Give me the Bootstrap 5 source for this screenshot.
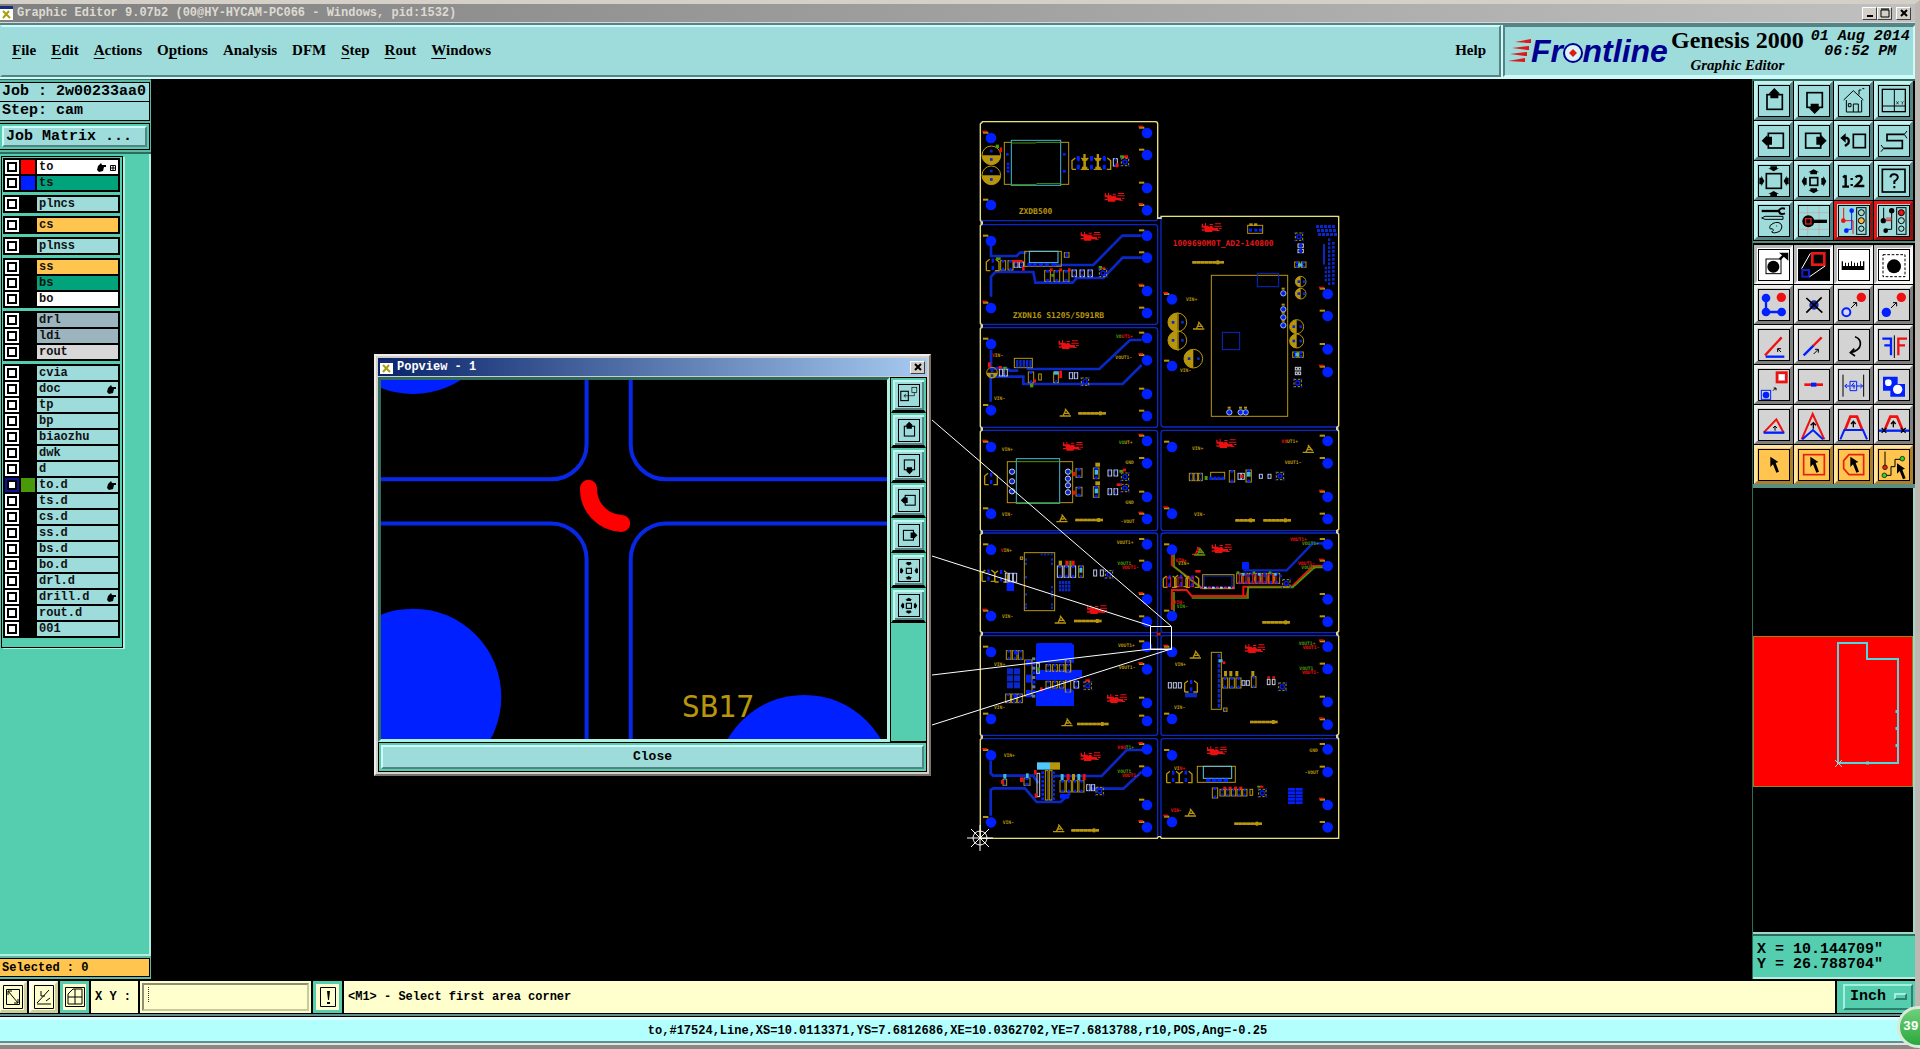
<!DOCTYPE html>
<html lang="en">
<head>
<meta charset="utf-8">
<meta name="viewport" content="width=device-width, initial-scale=1">
<title>Graphic Editor 9.07b2</title>
<link rel="stylesheet" href="https://cdn.jsdelivr.net/npm/bootstrap@5.3.0/dist/css/bootstrap.min.css">
<style>
:root{--cy:#9edcdc;--cyhi:#cffafa;--cylo:#568484;--teal:#55ceb0;--tealhi:#b0f0e0;--teallo:#2f6b5c;--amber:#ffc54f;--cream:#ffffcd;--win:#d4d0c8}
body{background:#000;color:#000;font:bold 12px/14px "Liberation Mono",monospace;overflow:hidden}
button,input,select{font:inherit;color:inherit;border-radius:0}
button{padding:0}
.t15{font-size:15px;line-height:18px}
.win-edge{border-top:4px solid var(--win);border-right:5px solid #bdb9b2;border-bottom:4px solid #8b8883}
.titlebar{height:19px;background:linear-gradient(90deg,#808080,#c0c0c0);color:#dedad2;border-bottom:1px solid #d8d8d8}
.wbtn{width:15px;height:13px;background:var(--win);border:1px solid;border-color:#fff #404040 #404040 #fff;line-height:9px}
.wbtn svg{display:block;margin:auto}
.topbar{height:56px;border-top:2px solid var(--cylo);background:var(--cyhi)}
.menu-pane{background:var(--cy);border:2px solid;border-color:var(--cyhi) var(--cylo) var(--cylo) var(--cy);margin-bottom:2px;gap:15px;padding:0 13px 2px 10px;font:bold 15px/20px "Liberation Serif",serif}
.menu-pane a{color:#000;text-decoration:none}
.menu-pane u{text-underline-offset:3px;text-decoration-thickness:1px}
.brand-pane{width:412px;background:var(--cy);border:2px solid;border-color:var(--cylo) var(--cyhi) var(--cyhi) var(--cylo);margin:0 0 2px 2px}
.genesis{font:bold 24px/26px "Liberation Serif",serif}
.gsub{font:italic bold 15px/24px "Liberation Serif",serif}
.clock{font-style:italic;font-size:15px;line-height:15px;padding:2px 0 0 4px}
.side-l{width:151px;background:var(--teal);border-right:2px solid var(--tealhi)}
.side-head{border-top:1px solid var(--teallo);border-bottom:2px solid var(--teallo);padding:2px 1px 2px 0;margin-right:-2px;background:#5cb9a4}
.field-box{background:var(--cy);border:1px solid #000;border-left:0;height:20px;padding-left:2px}
.field-box+.field-box{border-top:0;height:19px}
.matrix-frame{background:var(--teal);border:1px solid #000;border-left:0;margin-top:2px;padding:2px}
.bevel{background:var(--cy);border:2px solid;border-color:var(--cyhi) var(--cylo) var(--cylo) var(--cyhi)}
.matrix-btn{display:block;height:21px;width:100%;text-align:left;padding-left:2px;line-height:16px}
.layers{width:122px;border:1px solid #000;box-shadow:2px 1px 0 var(--tealhi);margin:2px 0 0 1px;padding:1px 2px 9px 1px;gap:3px}
.lgroup{background:#000;padding:2px;gap:2px;width:117px}
.lrow{height:14px;gap:2px}
.lrow input{appearance:none;width:14px;height:14px;margin:0;background:#fff;border:2px solid #fff;box-shadow:inset 0 0 0 2px #000}
.lrow input:checked{border-color:#101090}
.swatch{width:14px;height:14px}
.lname{border:0;text-align:left;line-height:14px;padding:0 2px;color:#111}
.sel-frame{background:#5cb9a4;padding:2px 1px 2px 0;border-top:2px solid var(--tealhi);margin-right:-2px}
.sel-box{background:var(--amber);border:1px solid #000;border-left:0;height:19px;line-height:18px;padding-left:2px}
.side-r{width:163px;border-left:1px solid var(--teallo);background:#000}
.toolbox{border-top:2px solid var(--teallo);border-bottom:4px solid #5a8c80}
.tools{display:grid;grid-template-columns:repeat(4,39px);gap:1px;padding:0 0 0 1px}
.tools+.tools{border-top:2px solid #5a8c80;margin-top:1px;padding-top:2px}
.tool{height:39px;width:39px;background:var(--cy);border:3px solid;border-color:#c4f0f0 #568484 #568484 #c4f0f0;display:flex;align-items:center;justify-content:center}
.tool svg{outline:1px solid #000;width:30px;height:30px}
.tool.on{border-color:#e81818 #901414 #901414 #e81818}
.tool.gr{background:#d3d3d3;border-color:#efefef #808080 #808080 #efefef}
.tool.wh{background:#fff;border-color:#b8b8b8 #f4f4f4 #f4f4f4 #b8b8b8}
.tool.am{background:var(--amber);border-color:#ffe4a8 #a88030 #a88030 #ffe4a8}
.thumb{border-right:2px solid #9fd8c8}
.xy{background:var(--teal);border-top:2px solid var(--teallo);border-bottom:2px solid var(--tealhi);box-shadow:0 -2px 0 #9fd8c8;height:45px;padding:6px 4px;line-height:15px}
.foot{height:32px;gap:2px;margin-top:2px}
.foot>*{background:var(--cream)}
.fbtn{width:29px;border:3px solid;border-color:#fffff0 #cfcf9c #cfcf9c #fffff0}
.fbtn:first-child{width:27px;border-left-width:1px}
.fbtn.on{border:3px solid var(--teal)}
.fbtn svg{width:20px;height:24px;display:block;margin:auto}
.xylabel{width:47px}
.foot .xyin{width:167px;margin:2px;border:2px solid;border-color:#8e8e70 #c9c99e #c9c99e #8e8e70;box-shadow:0 0 0 2px var(--cream);padding:0 6px;background:repeating-linear-gradient(#333 0 1px,var(--cream) 1px 2px) 4px 2px/1px 16px no-repeat var(--cream)}
.unit{width:78px;padding:3px 2px 3px 6px}
.foot .unit{background:var(--teal)}
.unit select{appearance:none;width:100%;height:100%;background:var(--teal);border:2px solid;border-color:#a5f0dc #2f7f6c #2f7f6c #a5f0dc;padding:0 5px}
.nub{right:8px;top:12px;width:13px;height:7px;background:var(--teal);border:2px solid;border-color:#a5f0dc #2f7f6c #2f7f6c #a5f0dc;pointer-events:none}
.status{height:26px;background:#b2fffd;border-top:3px solid #d8ffff;border-bottom:2px solid #658e8e;box-shadow:0 -1px 0 #000,0 -3px 0 #658e8e,0 2px 0 #e4e4e4;margin:4px 0 2px;line-height:22px}
.orb{width:42px;height:42px;border-radius:50%;background:linear-gradient(#6fd07a,#2aa83c);border:3px solid #d9ead9;color:#fff;right:-24px;bottom:-3px;line-height:36px;padding-left:3px;font-size:13px}
.popview{left:223px;top:275px;width:557px;background:var(--win);border:2px solid;border-color:#eee #77736c #77736c #eee;padding:2px}
.poptitle{height:19px;background:linear-gradient(90deg,#0a246a,#a6caf0);color:#fff;padding:0 2px;border-bottom:1px solid #ccc}
.popcanvas{border:3px solid;border-color:var(--teallo) var(--tealhi) var(--tealhi) var(--teallo);background:#000;height:365px}
.poptools{width:37px;background:var(--teal);border:1px solid #000}
.poptools button{width:35px;height:35px;background:var(--cy);border:2px solid var(--teal);border-bottom:3px solid #000;box-shadow:inset 2px 2px 0 #c4f6f0,inset -2px -2px 0 #568484}
.poptools svg{width:20px;height:21px;outline:1px solid #000;display:block;margin:auto}
.popclose{height:30px;background:var(--teal);border:1px solid #000;padding:2px}
.popclose button{width:100%;height:100%;font-size:13px;font-weight:bold;line-height:18px}
.scene{left:0;top:0}
.scene text{font-family:"DejaVu Sans Mono",monospace;font-weight:bold}
</style>
<script src="https://cdn.jsdelivr.net/npm/bootstrap@5.3.0/dist/js/bootstrap.bundle.min.js"></script>
</head>
<body>
<div class="win-edge vh-100 d-flex flex-column position-relative">
  <header class="titlebar d-flex align-items-center justify-content-between pe-1">
    <span class="d-flex align-items-center gap-1">
      <svg width="13" height="14" viewBox="0 0 13 14"><path fill="#1a2a7a" d="M0 0h13v3H0z"/><path fill="#fff" d="M0 3h13v11H0z"/><path d="M3 5l7 7M9 5l-6 7" stroke="#a8a010" stroke-width="2"/></svg>
      <span>Graphic Editor 9.07b2 (00@HY-HYCAM-PC066 - Windows, pid:1532)</span>
    </span>
    <span class="d-flex">
      <button class="wbtn" aria-label="Minimize"><svg width="10" height="10"><path d="M2 8h6" stroke="#000" stroke-width="2"/></svg></button>
      <button class="wbtn" aria-label="Maximize"><svg width="10" height="10"><path d="M1 2h8v7H1z M1 1h8" fill="none" stroke="#000"/></svg></button>
      <button class="wbtn ms-1" aria-label="Close window"><svg width="10" height="10"><path d="M2 2l6 6M8 2l-6 6" stroke="#000" stroke-width="2"/></svg></button>
    </span>
  </header>

  <div class="topbar d-flex">
    <nav class="menu-pane d-flex align-items-center flex-grow-1">
      <a href="#"><u>F</u>ile</a><a href="#"><u>E</u>dit</a><a href="#"><u>A</u>ctions</a><a href="#">O<u>p</u>tions</a><a href="#">Analysis</a><a href="#">DFM</a><a href="#"><u>S</u>tep</a><a href="#"><u>R</u>out</a><a href="#"><u>W</u>indows</a>
      <a href="#" class="ms-auto">Help</a>
    </nav>
    <div class="brand-pane d-flex">
      <svg width="166" height="48" viewBox="-2 0 166 48">
        <g fill="#e01818"><path d="M8 15l16-3v4h-3zM5 21l17-2v4h-2zM3 27l17-2v4h-2zM1 34l17-3v4z"/></g>
        <text x="24" y="35" font-family="Liberation Sans" font-weight="bold" font-style="italic" font-size="32" fill="#000090">Fr<tspan fill="none">o</tspan>ntline</text>
        <circle cx="66" cy="26" r="9" fill="#d8f4f4" stroke="#000090" stroke-width="2"/><path d="M66 22l4 4-4 4-4-4z" fill="#e01818"/>
      </svg>
      <div class="text-center d-flex flex-column"><span class="genesis">Genesis 2000</span><span class="gsub">Graphic Editor</span></div>
      <div class="clock text-center flex-grow-1 text-nowrap">01 Aug 2014<br>06:52 PM</div>
    </div>
  </div>

  <main class="d-flex flex-grow-1">
    <aside class="side-l d-flex flex-column">
      <div class="side-head">
        <div class="field-box t15">Job : 2w00233aa0</div>
        <div class="field-box t15">Step: cam</div>
        <div class="matrix-frame"><button class="bevel matrix-btn t15">Job Matrix ...</button></div>
      </div>
      <div class="layers d-flex flex-column" id="layers"></div>
      <div class="sel-frame mt-auto"><div class="sel-box">Selected : 0</div></div>
    </aside>

    <section class="flex-grow-1 position-relative overflow-hidden">
      <svg class="scene position-absolute" width="1601" height="900" viewBox="151 79 1601 900">
        <g id="board" transform="translate(970 110) scale(.33333)"></g>
        <g fill="none" stroke="#fff" stroke-width="1">
          <path d="M932 420L1171 626M932 556L1151 626M932 675L1151 649L1171 649L932 725M1150.500 626.500H1171.500V649.500H1150.500z"/>
          <path d="M980 825v26M967 838h26M971 829l18 18M989 829l-18 18"/><circle cx="980" cy="838" r="7"/>
        </g>
      </svg>
      <div class="popview position-absolute">
        <div class="poptitle d-flex align-items-center justify-content-between">
          <span class="d-flex align-items-center gap-1"><svg width="13" height="14" viewBox="0 0 13 14"><path fill="#1a2a7a" d="M0 0h13v3H0z"/><path fill="#fff" d="M0 3h13v11H0z"/><path d="M3 5l7 7M9 5l-6 7" stroke="#a8a010" stroke-width="2"/></svg>Popview - 1</span>
          <button class="wbtn" aria-label="Close popview"><svg width="10" height="10"><path d="M2 2l6 6M8 2l-6 6" stroke="#000" stroke-width="2"/></svg></button>
        </div>
        <div class="d-flex">
          <div class="popcanvas flex-grow-1">
            <svg class="d-block w-100 h-100" viewBox="0 0 505 358" preserveAspectRatio="xMinYMin slice">
              <g fill="#0020ff"><circle cx="32" cy="-74" r="88"/><circle cx="32" cy="316" r="88"/></g>
              <g fill="none" stroke="#0828e8" stroke-width="4">
                <path d="M205 0V64A35 35 0 0 1 170 99H0M249 0V64A35 35 0 0 0 284 99H506M0 143H170A35 36 0 0 1 205 179V360M506 143H284A35 36 0 0 0 249 179V360"/>
              </g>
              <path d="M207 108A34 34 0 0 0 240 143" fill="none" stroke="#f00" stroke-width="17" stroke-linecap="round"/>
              <text x="300" y="336" font-family="DejaVu Sans Mono" font-weight="normal" font-size="30" fill="#b8960c">SB17</text>
              <circle cx="422" cy="402" r="88" fill="#0020ff"/>
            </svg>
          </div>
          <div class="poptools d-flex flex-column" id="poptools"></div>
        </div>
        <div class="popclose"><button class="bevel">Close</button></div>
      </div>
    </section>

    <aside class="side-r d-flex flex-column">
      <div class="toolbox"><div class="tools" id="toolsA"></div><div class="tools" id="toolsB"></div></div>
      <div class="thumb flex-grow-1 d-flex align-items-center">
        <svg width="160" height="151" viewBox="0 0 160 151" class="d-block w-100"><path d="M0 0h160v151H0z" fill="#f00" stroke="#a08010" stroke-width="2"/><path d="M85 7h29v16h31v104H85z" fill="none" stroke="#50d8e0" stroke-width="2"/><path d="M144 74v3M144 91v3M144 108v3M113 127h3" stroke="#50d8e0" stroke-width="3"/><path d="M82 124l7 7M89 124l-7 7" stroke="#ccc"/></svg>
      </div>
      <div class="xy t15">X = 10.144709"<br>Y = 26.788704"</div>
    </aside>
  </main>

  <footer class="foot d-flex">
    <button class="fbtn" aria-label="Measure"><svg viewBox="0 0 20 24" fill="none" stroke="#000"><path d="M.5.5h19v23H.5z M3.500 4.500h13v15h-13zM5 6l10 12M5 10V6h4M15 14v4h-4"/></svg></button>
    <button class="fbtn" aria-label="Angle"><svg viewBox="0 0 20 24" fill="none" stroke="#000"><path d="M.5.5h19v23H.5z M3 18L15 5M3 19h14M7 6v5h4M12 16l4-3"/></svg></button>
    <button class="fbtn on" aria-label="Grid"><svg viewBox="0 0 20 24" fill="none" stroke="#000"><path d="M.5 2.500h19v19H.5z M3 9l5-5h9v15H3zM10 4v15M3 12h14" stroke-width="1"/></svg></button>
    <label class="xylabel d-flex align-items-center ps-1" for="xy">X Y :</label>
    <input class="xyin" id="xy" type="text">
    <button class="fbtn on" aria-label="Alert"><svg viewBox="0 0 20 24"><path d="M2.500 2.500h15v19h-15z" fill="none" stroke="#000"/><path d="M9 6h3l-1 9h-1zM9 17h3v2H9z"/></svg></button>
    <div class="flex-grow-1 d-flex align-items-center ps-1">&lt;M1&gt; - Select first area corner</div>
    <div class="unit position-relative"><select class="t15" aria-label="Unit"><option>Inch</option><option>MM</option></select><span class="nub position-absolute"></span></div>
  </footer>
  <div class="status text-center">to,#17524,Line,XS=10.0113371,YS=7.6812686,XE=10.0362702,YE=7.6813788,r10,POS,Ang=-0.25</div>
  <div class="orb position-absolute overflow-hidden">39</div>
</div>

<script>
// ---------- layer list ----------
const C = '#9edcdc', W = '#fff', A = '#ffc54f', G = '#00a37c', B = '#9cb4be';
const hand = '<svg class="float-end" width="9" height="14" viewBox="0 0 9 14"><path d="M0 10l1-4 3-3 1 2h4v2H7l-1 4-4 1z"/></svg>';
const grid = '<svg class="float-end ms-1" width="6" height="14" viewBox="0 0 6 14"><path d="M.5 5.500h5v5h-5zM3 5v6M0 8h6" fill="none" stroke="#000"/></svg>';
const groups = [
  [['to',W,'#f00',grid+hand],['ts',G,'#0020ff']],
  [['plncs',C]], [['cs',A]], [['plnss',C]],
  [['ss',A],['bs',G],['bo',W]],
  [['drl',B],['ldi',B],['rout','#d8d8d8']],
  [['cvia',C],['doc',C,'',hand],['tp',C],['bp',C],['biaozhu',C],['dwk',C],['d',C],['to.d',C,'#489a08',hand],['ts.d',C],['cs.d',C],['ss.d',C],['bs.d',C],['bo.d',C],['drl.d',C],['drill.d',C,'',hand],['rout.d',C],['001',C]]
];
document.getElementById('layers').innerHTML = groups.map(g => '<div class="lgroup d-flex flex-column">' + g.map(([n,bg,sw,ex]) =>
  `<div class="lrow d-flex"><input type="checkbox" aria-label="Show ${n}"${n==='to.d'?' checked':''}><span class="swatch" style="background:${sw||'#000'}"></span><button class="lname flex-grow-1" style="background:${bg}">${ex||''}${n}</button></div>`).join('') + '</div>').join('');

// ---------- tool icons, drawn on a 90 x 90 grid ----------
const L = (d,w=4,c='#000') => `<path d="${d}" fill="none" stroke="${c}" stroke-width="${w}"/>`;
const F = (d,c='#000') => `<path d="${d}" fill="${c}"/>`;
const R = (x,y,w,h,s=5,c='#000') => `<rect x="${x}" y="${y}" width="${w}" height="${h}" fill="none" stroke="${c}" stroke-width="${s}"/>`;
const O = (x,y,r,f='#000',s='none',w=0) => `<circle cx="${x}" cy="${y}" r="${r}" fill="${f}" stroke="${s}" stroke-width="${w}"/>`;
const up = (x,y) => F(`M${x} ${y}l17 17h-5v14h-24v-14h-5z`);
const dn = (x,y) => F(`M${x} ${y}l17 -17h-5v-14h-24v14h-5z`);
const lf = (x,y) => F(`M${x} ${y}l17 -17v5h14v24h-14v5z`);
const rt = (x,y) => F(`M${x} ${y}l-17 -17v5h-14v24h14v5z`);
const t = {u:(x,y)=>F(`M${x} ${y}l16 9h-6v6h-20v-6h-6z`), d:(x,y)=>F(`M${x} ${y}l16 -9h-6v-6h-20v6h-6z`), l:(x,y)=>F(`M${x} ${y}l9 -16v6h6v20h-6v6z`), r:(x,y)=>F(`M${x} ${y}l-9 -16v6h-6v20h6v6z`)};
const cur = (x,y) => F(`M${x} ${y}l24 16-8 3 10 26-8 3-10-25-8 8z`);
const b='#0020ff', r='#f01010', lights=(a,m)=>R(53,5,28,80,3)+O(67,20,9,a,'#000',3)+O(67,44,9,m,'#000',3)+O(67,68,8,'none','#000',3);
const I = {
  up: R(24,26,46,44)+up(46,6), dn: R(24,20,46,44)+dn(47,84),
  house: L('M14 42L43 14L73 42M22 42V78H68V42M43 78V54H58V78M28 53h8v9h-8zM60 26V12h7M70 8h6',3),
  xy: R(10,10,69,67,4)+L('M46 10V77M10 60H79',3)+L('M52 46l7 9M59 46l-7 9M66 46l4 4 4-4M70 50v6',2),
  lf: R(28,22,45,44)+lf(8,44), rt: R(20,22,45,44)+rt(83,44),
  undo: R(43,25,36,40)+L('M14 36H24Q32 40 28 52L18 60',7)+F('M4 36L20 22V50z'),
  ess: L('M76 25H24V44H70V67H14',5)+L('M76 25l8-10M76 25l8 12M14 67l-8-10M14 67l-8 10',3),
  zin: R(22,23,45,44)+t.d(44,16)+t.u(44,75)+t.r(16,45)+t.l(74,45),
  zout: R(33,35,23,23)+t.u(44,10)+t.d(44,82)+t.l(8,46)+t.r(82,46),
  zinp: R(33,35,23,23)+t.d(44,22)+t.u(44,70)+t.r(20,46)+t.l(70,46),
  half: L('M20 28V62M12 34L20 28M10 62H30M38 36v6M38 54v6M50 34Q54 28 64 30Q72 36 64 46L50 60H76',7),
  help: R(10,10,68,68,5)+L('M34 34Q36 24 46 25Q58 26 56 36Q54 42 46 46V54M46 60v7',6),
  set: L('M8 15H60',7)+L('M78 8Q62 4 60 15Q62 28 78 22',6)+L('M8 36l10-5h54v9H18z',3)+L('M34 58Q50 44 64 52Q74 62 62 76Q44 84 38 78Q48 72 40 68Q28 72 34 58zM52 60h2',3),
  probe: L('M26 0V90M60 0V90M0 20H90M0 70H90',2,'#c8a0a0')+L('M40 46H84',10)+O(28,46,18)+R(20,38,16,16,4,'#e02020'),
  la: L('M14 5V40M14 44H42V60V84',3,r)+O(13,44,7,r)+L('M38 14V70H20',3,b)+O(38,14,7,b)+O(22,74,7,b)+lights('none','#ffb848'),
  lb: L('M14 5V40M38 14V70H20',3)+O(13,44,8)+O(38,14,8)+O(20,74,7)+L('M20 44H36M24 34v10M30 34v10M36 34v10',3,r)+lights('#f01010','none'),
  sel: R(21,27,45,44,3)+O(43,50,18)+L('M62 28L76 14',7)+F('M60 8H88V32z'),
  net: F('M0 0H90V90H0z')+R(40,10,36,34,8,'#e81818')+R(10,60,20,20,6,'#1020d0')+L('M34 10L8 56M78 48L32 80',3,W),
  rule: F('M8 34h4v14h6V38h3v10h6V38h3v10h6V34h3v14h6V38h3v10h6V38h3v10h6V34h3v14h6V34h4V60H8z'),
  mask: `<rect x="12" y="14" width="66" height="66" fill="none" stroke="#000" stroke-width="3" stroke-dasharray="8 5"/>`+O(45,49,21),
  ln: L('M21 24V66H68',7,b)+O(21,24,13,b)+O(21,66,13,b)+O(68,66,13,b)+O(67,22,14,r),
  del: O(45,45,14,'#1828a0')+L('M22 24L70 68M68 22L22 68',5),
  mv: O(67,22,14,r)+O(22,67,12,'#d8d8ff',b,6)+L('M36 54L52 38M42 38h11v11',3),
  cp: O(67,22,14,r)+O(22,67,14,b)+L('M36 54L52 38M42 38h11v11',3),
  ang: L('M18 76L68 22',7,r)+L('M20 80H76',7,b)+L('M66 66L56 56M56 66V56H66',3),
  sl: L('M14 76L44 46',7,b)+L('M42 48L68 22',7,r)+L('M44 72L58 58M48 58H58V68',3),
  rot: L('M48 20Q66 26 64 44Q62 62 34 68M46 56L34 68L48 78',5),
  mir: L('M46 16V84',3)+L('M10 26H36V76M36 46H16',7,b)+L('M84 26H58V76M58 46H78',7,r),
  scl: R(54,8,28,28,8,r)+F('M60 14h16v16H60z','#fff')+R(7,61,28,27,3,b)+O(21,75,10,b)+L('M42 62L50 54M44 54h7v7',3),
  brk: L('M16 44H72',8,r)+F('M36 38h16v12H36z',b),
  dim: L('M12 14V80M74 14V80',3)+L('M18 48H32M54 48H70M24 42l-7 6 7 6M64 42l7 6-7 6M33 34h20v28H33zM45 38l-8 10h12M45 44v12',3,b),
  mrg: F('M12 20h44v22h22v38H34V62H12z',b)+O(28,38,10,'#fff')+O(56,58,14,'#fff'),
  t1: L('M14 68L52 28L74 68',6,r)+L('M14 68H76',7,b)+L('M48 62V48M42 54l6-6 6 6',3),
  t2: L('M8 88L41 12L76 88',6,r)+L('M10 88L42 60L72 88',6,b)+L('M43 56V38M35 46l8-8 8 8',4),
  t3: L('M18 60L34 20H54L70 60',8,r)+L('M4 88L16 60H72L84 88',6,b)+L('M43 52V34M36 42l7-8 7 8',4),
  t4: L('M18 58L34 20H54L70 58',8,r)+L('M0 62H90',7,b)+L('M43 52V34M36 42l7-8 7 8M8 54l14 14M22 54l-14 14M66 54l14 14M80 54l-14 14',4),
  c1: cur(34,20), c2: R(14,14,62,60,5,'#e82010')+cur(34,20), c3: L('M30 14H74V74H30L14 56V32z',5,'#e82010')+cur(34,20),
  c4: L('M18 5V48M20 76H36V50H48V28H64',3)+O(18,52,7,'#e82010','#000',2)+O(16,76,7,'#30d030','#000',2)+O(70,26,7,'#30d030','#000',2)+cur(54,40),
  pop: R(8,26,34,42)+R(58,8,22,24,3)+L('M69 32V46H22M32 38l-10 8 10 8',3)
};
const svg = n => `<svg viewBox="0 0 90 90">${I[n]}</svg>`;
const btn = (n,cls) => `<button class="tool ${cls}" aria-label="${n}">${svg(n)}</button>`;
document.getElementById('toolsA').innerHTML = ['up','dn','house','xy','lf','rt','undo','ess','zin','zout','half','help','set','probe'].map(n=>btn(n,'')).join('') + btn('la','on') + btn('lb','on');
document.getElementById('toolsB').innerHTML = ['sel','net','rule','mask'].map(n=>btn(n,'wh')).join('')
  + ['ln','del','mv','cp','ang','sl','rot','mir','scl','brk','dim','mrg','t1','t2','t3','t4'].map(n=>btn(n,'gr')).join('')
  + ['c1','c2','c3','c4'].map(n=>btn(n,'am')).join('');
document.getElementById('poptools').innerHTML = ['pop','up','dn','lf','rt','zinp','zout'].map(n=>`<button aria-label="Popview ${n}">${svg(n)}</button>`).join('');

// ---------- PCB panel ----------
const Y='#b8960c', BL='#0020ff', DB='#0a28c8', YL='#f0e060', WH='#c8ccd8', GN='#489a08', TQ='#40b8d8';
let s='';
const rect=(x,y,w,h,c,f='none',sw=3)=>{s+=`<rect x="${x}" y="${y}" width="${w}" height="${h}" fill="${f}" stroke="${c}" stroke-width="${sw}"/>`};
const box=(x,y,w,h,c)=>{s+=`<rect x="${x}" y="${y}" width="${w}" height="${h}" fill="${c}"/>`};
const pl=(d,c,w=6)=>{s+=`<path d="${d}" fill="none" stroke="${c}" stroke-width="${w}"/>`};
const txt=(x,y,v,c=Y,z=14)=>{s+=`<text x="${x}" y="${y}" font-size="${z}" fill="${c}">${v}</text>`};
const rows=[[35,297],[344,299],[653,299],[961,301],[1269,299],[1577,299],[1886,299]];
const frame=(x,y,w,h)=>{s+=`<rect x="${x}" y="${y}" width="${w}" height="${h}" rx="8" fill="none" stroke="${DB}" stroke-width="4"/>`};
rows.forEach(([y,h])=>frame(31,y,532,h));
frame(573,319,533,632); rows.slice(3).forEach(([y,h])=>frame(573,y,533,h));
pl('M38 35H556Q563 35 563 42V325H573V319H1106V948l-6 4v6l6 4V1258l-6 4v6l6 4V1564l-6 4v6l6 4V1872l-6 4v6l6 4V2185H574l-3-5h-6l-3 5H31V1888l6-4v-6l-6-4V1578l6-4v-6l-6-4V1274l6-4v-6l-6-4V964l6-4v-6l-6-4V655l6-4v-6l-6-4V346l6-4v-6l-6-4V42z',YL,4);
[338,648,956,1266,1572,1880].forEach(y=>pl(`M34 ${y-5}v10`,WH,5));
[956,1266,1572,1880].forEach(y=>pl(`M1103 ${y-5}v10`,WH,5));
pl('M562 324h12',WH,5);

// traces
pl('M63 400V438H140L150 428H170M250 465H370L457 377H515M63 560V500L76 486H190L196 518H308L320 504H400L458 443H515',DB,8);
pl('M63 720V775H110L120 782H145M170 777H388L480 690H515M62 875V800H160V822H458L515 765',DB,8);
pl('M62 1952V1990L70 1997H190L205 2020M250 1998H395L470 1920H520M62 2117V2040L70 2035H165L200 2076H272L300 2050M360 2036H460L515 1985',DB,8);
pl('M820 1381H950L1028 1300H1060',DB,7);
pl('M606 1330V1365L690 1430M820 1455V1430H965L1030 1368H1060M606 1500V1440H650L665 1458H830L836 1430',r,6);
pl('M612 1330V1370L694 1434M665 1464H834V1432H968L1034 1372H1060M612 1510V1446',GN,5);

// pads with their reference tags
const pads=[[63,[84,285,393,594,702,901,1011,1211,1319,1518,1626,1827,1936,2137]],
 [531,[69,135,234,301,377,443,543,609,684,751,852,918,993,1060,1161,1227,1303,1368,1468,1535,1610,1678,1779,1833,1918,1985,2085,2152]],
 [606,[568,768,1011,1211,1319,1518,1626,1827,1936,2136]],
 [1073,[552,618,718,786,993,1060,1161,1227,1303,1368,1468,1535,1610,1677,1776,1844,1918,1986,2085,2152]]];
pads.forEach(([x,ys])=>ys.forEach((y,i)=>{s+=`<circle cx="${x}" cy="${y}" r="16" fill="${BL}"/>`;box(x-24,y-19,16,6,Y);if(i%3==0)box(x-26,y-22,14,5,'#e01010')}));

// company marks, warning triangles, model bars
const logo=(x,y)=>{s+=`<g transform="translate(${x} ${y})" fill="#e81010"><path d="M0 2h4v6h6v-8h3v8h8v3h14v4h14v8H32v4H10v-4H0v-4h8v-5H0z"/><path d="M24 3h10v3H24zM40 1h18v3H40zM24 9h8v3h-8zM38 8h22v3H38zM52 15h8v3h-8zM44 21h10v3H44z"/></g>`};
[[404,248],[332,365],[266,690],[695,339],[279,995],[739,987],[351,1485],[725,1302],[411,1752],[825,1602],[332,1926],[711,1909]].forEach(p=>logo(...p));
const warn=(x,y,c=Y)=>{pl(`M${x} ${y}l14 18M${x+2} ${y+4}l-8 18h24M${x-16} ${y+22}h10M${x-4} ${y+14}h12`,c,4)};
[[285,896],[685,635],[275,1213],[1014,1005],[270,1517],[290,1825],[675,1622],[265,2143],[660,2096]].forEach(p=>warn(...p));
warn(682,1311,r);warn(688,1313,GN);
const bar=(x,y,w)=>{for(let i=0;i<w;i+=12)box(x+i,y-2,11,8,Y);box(x,y,w,5,Y);box(x+w-14,y-4,8,12,Y)};
[[667,455,86],[325,908,76],[316,1228,80],[796,1229,56],[880,1229,76],[312,1531,80],[877,1535,80],[321,1840,86],[840,1834,80],[304,2159,78],[793,2139,78]].forEach(p=>bar(...p));

// parts
const res=(x,y,w=15,h=24,c=WH)=>{rect(x,y,w,h,c,'none',3);box(x+4,y-2,w-8,8,BL);box(x+4,y+h-7,w-8,8,BL)};
const many=(x,y,n,p,w,h,c)=>{for(let i=0;i<n;i++)res(x+i*p,y,w,h,c)};
const can=(x,y,k=28,v)=>{s+=`<circle cx="${x}" cy="${y}" r="${k}" fill="none" stroke="${Y}" stroke-width="3"/>`;s+=v?`<path d="M${x} ${y-k}A${k} ${k} 0 0 0 ${x} ${y+k}z" fill="${Y}"/>`:`<path d="M${x-k} ${y}A${k} ${k} 0 0 0 ${x+k} ${y}z" fill="${Y}"/>`;
  v?(box(x-k*.6,y-4,8,8,DB),box(x+k*.4,y-4,8,8,DB)):(box(x-4,y-k*.6,8,8,DB),box(x-4,y+k*.3,8,8,DB))};
const spark=(x,y)=>{s+=`<rect x="${x-11}" y="${y-11}" width="22" height="22" fill="none" stroke="${Y}" stroke-width="3" stroke-dasharray="7 5"/><circle cx="${x}" cy="${y}" r="6" fill="none" stroke="${BL}" stroke-width="4"/>`;[[-14,-14],[10,-14],[-14,10],[10,10]].forEach(([a,c])=>box(x+a,y+c,4,4,BL))};
const leg=(x,y)=>{pl(`M${x} ${y+34}V${y+8}L${x+10} ${y}M${x} ${y+34}H${x+12}M${x+28} ${y}L${x+38} ${y+8}V${y+34}H${x+26}`,Y,4);box(x+16,y-2,7,12,BL);box(x+16,y+20,7,12,BL)};
// 1
can(64,136);can(64,196);rect(103,97,193,126,Y);rect(124,91,148,135,TQ,'#000');pl('M124 99H198L200 97H272M124 224H198L200 221H272',GN,3);
[[112,133],[283,133],[283,184],[114,162],[114,173],[114,184]].forEach(p=>box(p[0]-4,p[1]-4,8,8,BL));
box(77,104,10,10,GN);box(89,112,7,14,r);
leg(306,144);leg(345,144);leg(384,144);[336,376].forEach(x=>{box(x,144,16,8,Y);box(x+4,132,7,46,Y);box(x,170,16,8,Y)});[320,360,398].forEach(x=>{box(x,138,9,12,BL);box(x,166,9,12,BL)});
res(430,146,12,22);box(438,160,8,12,r);box(450,136,12,8,GN);box(462,136,12,8,r);spark(465,156);txt(146,311,'ZXDB500',Y,24);
// 2
leg(49,448);many(92,452,2,22,15,28,Y);many(132,456,2,16,12,16);box(126,450,32,7,r);box(78,442,14,8,GN);box(156,470,8,12,r);rect(164,424,110,45,Y);rect(178,424,86,34,'#58c8f0');[172,188,206,224,244].forEach(x=>box(x,459,13,10,BL));
res(283,428,14,14,Y);many(224,482,3,28,17,32,Y);many(306,480,3,24,13,20);[240,268,294].forEach(x=>box(x,475,8,9,r));box(244,492,8,8,GN);box(386,468,10,8,GN);box(396,472,10,6,r);spark(399,489);txt(128,623,'ZXDN16 S1205/5D91RB',Y,24);
// 3
txt(66,740,`<tspan fill="${r}">V</tspan>IN-`,Y);txt(72,869,'VIN-');txt(436,746,'VOUT1-');txt(438,684,`<tspan fill="${GN}">VO</tspan>UT1+`,r);
can(66,788,16);rect(133,745,54,28,Y);for(let i=0;i<5;i++)box(138+i*10,750,7,22,DB);many(88,778,2,14,10,20);box(54,757,8,16,r);box(86,768,10,8,r);box(100,770,10,8,GN);
res(175,786,16,32,Y);res(206,792,8,18,Y);res(251,786,14,32,Y);many(298,788,2,15,10,18);box(268,782,8,22,r);box(252,784,14,10,TQ);box(180,820,10,12,GN);box(190,808,8,10,r);spark(345,815);
// 4
leg(44,1090);rect(112,1055,196,123,Y);rect(139,1046,130,134,TQ,'#000');pl('M139 1055H269M139 1178H269',GN,3);[[126,1085],[126,1114],[126,1144],[294,1085],[294,1106],[294,1126],[294,1147]].forEach(p=>{s+=`<circle cx="${p[0]}" cy="${p[1]}" r="8" fill="${DB}" stroke="${WH}" stroke-width="3"/>`});
[1076,1132].forEach(y=>{res(318,y,18,26,Y);res(370,y-2,17,32,Y);box(374,y+4,10,14,'#40b8f0');box(376,y-18,14,12,Y);many(414,y+4,2,18,11,18);box(308,y+10,8,12,r)});box(300,1080,5,10,GN);spark(465,1100);spark(465,1134);box(448,1080,12,8,GN);box(458,1076,10,8,r);box(440,1120,12,8,r);
txt(95,1022,'VIN+');txt(95,1217,'VIN-');txt(446,1001,'VO<tspan fill="#b8960c">UT+</tspan>',GN);txt(466,1061,'GND');txt(466,1181,'GND');txt(452,1238,'-VOUT');
// 5
rect(163,1328,91,174,Y);[1345,1358,1398,1450,1480,1490].forEach(y=>box(165,y,6,7,DB));[1345,1358,1428,1442,1455,1480,1490].forEach(y=>box(243,y,6,7,DB));[212,222,232,242].forEach(x=>box(x,1330,6,6,DB));rect(151,1341,7,7,Y);
leg(36,1380);leg(74,1382);many(106,1390,3,12,10,26);box(110,1418,22,25,BL);many(262,1368,3,20,15,34);[266,286,304].forEach((x,i)=>box(x,1352,10,14,[Y,r,r][i]));box(298,1352,6,18,GN);res(326,1368,14,34,Y);box(328,1374,9,14,TQ);many(371,1380,2,20,9,18);spark(417,1393);
for(let i=0;i<4;i++)for(let j=0;j<3;j++)box(267+i*9,1413+j*11,7,9,DB);
txt(92,1325,`<tspan fill="${r}">V</tspan>IN+`);txt(96,1523,'VIN-',Y);txt(440,1301,'VOUT1+');txt(442,1366,'VOUT1',GN);txt(456,1377,'VOUT1-',r);
// 6
s+=`<path d="M198 1603l4-4H304l8 6V1658H198z M198 1680H320V1710H198zM198 1746l20-10H304l8 6V1788H198zM320 1680h16v22h-16z" fill="${BL}"/>`;
rect(164,1650,22,108,Y);for(let i=0;i<9;i++)box(186,1642+i*14,10,9,i%2?BL:'#6078b0');box(168,1650,15,16,BL);box(168,1694,15,24,BL);box(168,1740,15,22,BL);
for(let i=0;i<2;i++)for(let j=0;j<3;j++)box(111+i*21,1675+j*21,18,18,DB);
[[105,1622],[103,1752]].forEach(([x,y])=>{many(x+4,y,3,18,14,26,Y);box(x+28,y+2,12,10,BL)});
many(228,1664,4,20,14,20,Y);many(228,1714,3,20,14,20,Y);res(286,1652,16,34,Y);res(286,1712,16,34,Y);many(200,1660,1,10,8,30);many(312,1714,1,12,14,20,WH);box(202,1672,8,12,GN);box(210,1732,8,12,r);box(346,1708,14,7,r);spark(353,1727);
txt(72,1667,'VIN+');txt(72,1796,'VIN-');txt(444,1610,'VOUT1+');txt(446,1676,'VOUT1-');
// 7
box(201,1957,40,22,'#50c8f8');box(240,1957,30,22,Y);rect(201,1990,8,70,WH);many(226,1982,2,12,8,88,Y);for(let i=0;i<7;i++){box(214,1984+i*13,8,8,BL);box(247,1984+i*13,8,8,DB)}
many(270,2012,4,19,15,34,Y);[272,290,306,322,338].forEach((x,i)=>box(x,1992,9,18,[TQ,r,Y,TQ,r][i]));many(350,2024,2,14,10,18);box(270,2052,28,14,BL);spark(389,2043);res(99,2008,11,18,Y);box(100,1992,9,14,TQ);box(93,2010,8,12,r);res(162,2004,18,22,Y);box(168,1990,8,14,TQ);box(150,2002,10,14,r);box(192,1980,8,14,r);box(194,2050,8,14,r);
txt(101,1941,'VIN+');txt(98,2142,'VIN-');txt(442,1917,`<tspan fill="${r}">VOU</tspan>T1+`,GN);txt(442,1989,'VOUT1',GN);txt(456,2000,'VOUT1-',r);
// right 1
txt(608,409,'1009690M0T_AD2-140800','#e01818',24);rect(833,346,45,24,Y);[842,858,872].forEach(x=>box(x-5,356,9,9,BL));box(838,340,10,8,Y);box(852,340,10,8,Y);
rect(724,496,229,423,Y);rect(862,490,64,40,DB);rect(757,667,52,52,DB);
[[940,550],[940,598],[940,622],[940,646],[778,907],[812,907],[827,907]].forEach(p=>{s+=`<circle cx="${p[0]}" cy="${p[1]}" r="8" fill="${BL}" stroke="#a0b8e0" stroke-width="3"/>`;box(p[0]-5,p[1]-17,9,6,Y)});
can(622,637,28,1);can(622,691,28,1);can(670,746,28,1);pl('M624 608V722',Y,4);can(992,515,16,1);can(992,551,16,1);can(980,650,21,1);can(980,693,21,1);
spark(987,380);many(984,402,1,1,16,10);many(984,418,1,1,16,10);res(974,456,14,16,Y);res(994,456,14,16,Y);box(984,460,14,10,TQ);res(968,726,14,16,Y);res(986,726,14,16,Y);box(976,729,12,10,TQ);many(976,772,2,10,6,8);many(976,786,2,10,6,8);spark(983,819);
for(let i=0;i<5;i++)for(let j=0;j<3;j++)box(1038+j*3+i*12,345+j*12,9,9,DB);for(let i=0;i<12;i++){box(1074,385+i*12,7,8,DB);if(i<11)box(1086,396+i*12,8,8,DB)}box(1059,402,6,62,DB);for(let i=0;i<4;i++)box(1064,470+i*12,7,8,DB);
txt(648,572,'VIN+');txt(630,785,'VIN-');
// right 4
many(658,1090,3,14,11,22,Y);rect(722,1087,42,20,Y);[720,732,744,756].forEach(x=>box(x-2,1100,9,10,BL));box(704,1098,9,12,GN);res(778,1082,16,34,Y);many(804,1090,2,10,9,18);res(828,1080,16,36,Y);box(830,1086,12,14,TQ);many(868,1093,2,26,9,12);box(812,1094,8,10,r);spark(930,1098);
txt(666,1019,'VIN+');txt(672,1217,'VIN-');txt(934,998,`<tspan fill="${r}">VO</tspan>UT1+`,Y);txt(944,1063,'VOUT1-');
// right 5
box(816,1356,21,22,BL);rect(698,1394,94,42,Y);rect(702,1398,84,34,DB);leg(580,1398);leg(614,1396);leg(648,1398);many(590,1402,3,34,12,28,r);many(800,1390,7,19,15,30,Y);many(808,1394,6,20,10,26,r);for(let i=0;i<9;i++){box(690+i*12,1430,8,6,i%2?WH:'#e030a0');box(800+i*16,1384+i%3*5,8,8,[GN,TQ,DB][i%3])}spark(949,1420);box(676,1380,16,8,r);
txt(616,1355,'VIN+',r);txt(624,1366,'VIN+',Y);txt(610,1483,'VIN-',r);txt(620,1494,'VIN-',GN);txt(960,1294,'VOUT1+',r);txt(996,1306,'VOUT1+',GN);txt(984,1364,'VOUT1-',r);txt(994,1376,'VOUT1',GN);
// right 6
rect(724,1627,30,171,Y);for(let i=0;i<11;i++)box(743,1632+i*15,8,11,DB);box(746,1648,12,9,TQ);box(758,1654,8,8,r);res(761,1794,10,10,Y);many(595,1718,3,15,9,16,WH);leg(644,1712);box(645,1749,36,13,DB);many(758,1704,3,20,15,30,Y);[762,778,796,844].forEach(x=>box(x,1683,9,16,Y));many(816,1712,2,13,9,14);res(844,1700,14,32,Y);many(892,1708,2,15,8,16);box(892,1699,8,7,r);box(907,1699,8,7,r);spark(937,1730);
txt(614,1667,'VIN+');txt(612,1796,'VIN-');txt(986,1605,'VOUT1+',GN);txt(998,1617,'VOUT1-',r);txt(988,1680,'VOUT1',GN);txt(996,1691,'VOUT1-',r);
// right 7
leg(590,1984);leg(628,1984);rect(682,1969,114,48,Y);rect(700,1969,85,36,'#58c8f0');[708,726,742,760].forEach(x=>box(x,2006,14,10,BL));res(727,2034,16,30,Y);many(750,2038,5,17,13,20,Y);[760,776,792,808].forEach(x=>box(x,2030,9,8,r));res(840,2038,8,18,Y);box(862,2027,8,6,GN);box(870,2027,10,6,r);spark(877,2049);for(let i=0;i<2;i++)for(let j=0;j<5;j++)box(954+i*23,2034+j*10,21,8,BL);
txt(612,1981,`VI<tspan fill="${r}">N+</tspan>`);txt(602,2106,`VIN<tspan fill="${GN}">-</tspan>`,r);txt(1018,1925,'GND');txt(1004,1992,'-VOUT');
pl('M560 1568l12 9M572 1568l-12 9','#c02020',5);
document.getElementById('board').innerHTML=s;
</script>
</body>
</html>
